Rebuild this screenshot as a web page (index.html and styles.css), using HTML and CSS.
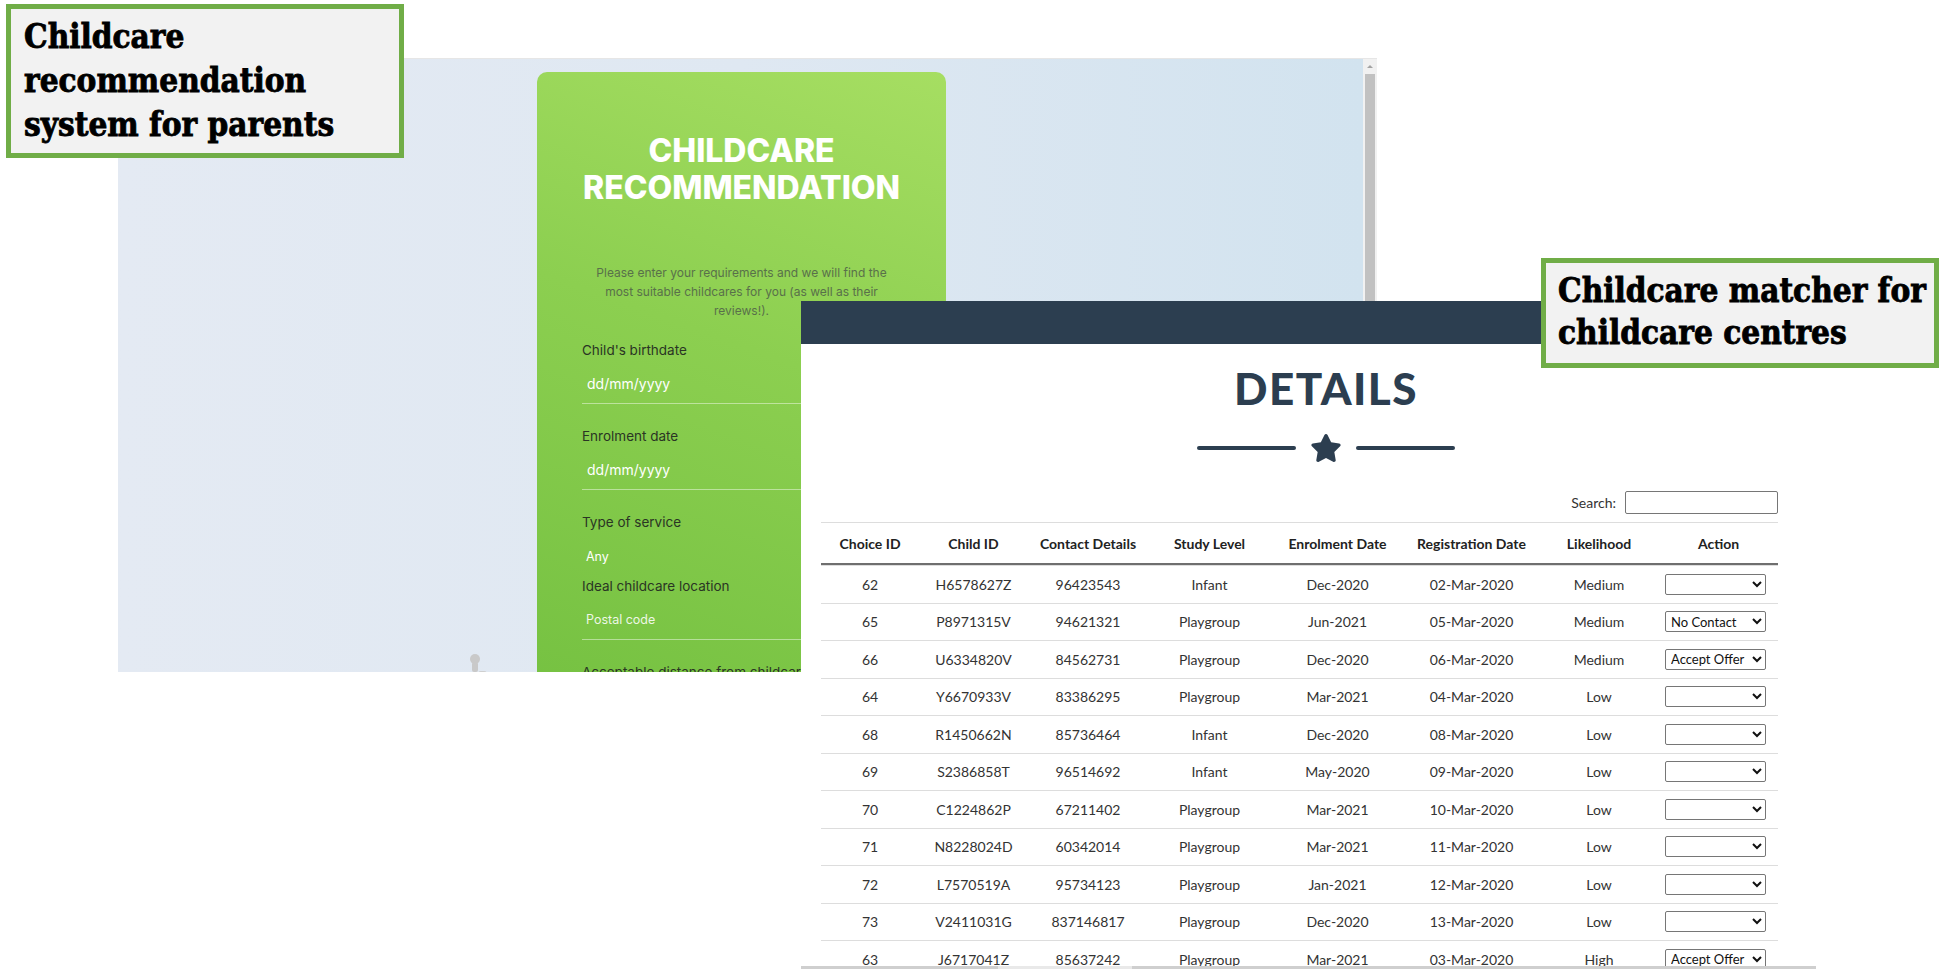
FILE: index.html
```html
<!DOCTYPE html>
<html lang="en">
<head>
    <meta charset="UTF-8">
    <meta name="viewport" content="width=device-width, initial-scale=1.0">
    <title>Childcare Recommendation &amp; Matcher</title>
    <link rel="stylesheet" href="styles.css">
</head>
<body>
<div class="canvas">

    <!-- parents' side: recommendation form -->
    <div class="shot parent-shot">
        <div class="parent-bg">
            <div class="rec-card">
                <h1 class="rec-title">CHILDCARE<br>RECOMMENDATION</h1>
                <p class="rec-intro">Please enter your requirements and we will find the<br>most suitable childcares for you (as well as their<br>reviews!).</p>

                <div class="field">
                    <label>Child's birthdate</label>
                    <div class="field-input">dd/mm/yyyy</div>
                </div>
                <div class="field">
                    <label>Enrolment date</label>
                    <div class="field-input">dd/mm/yyyy</div>
                </div>
                <div class="field">
                    <label>Type of service</label>
                    <div class="field-input field-select">Any</div>
                </div>
                <div class="field field-tight">
                    <label>Ideal childcare location</label>
                    <div class="field-input field-small">Postal code</div>
                </div>
                <div class="field">
                    <label>Acceptable distance from childcare</label>
                </div>
            </div>
            <svg class="figure" width="24" height="26" viewBox="0 0 24 26">
                <circle cx="8" cy="7" r="5" fill="#c9c9c9"/>
                <rect x="5" y="10" width="6" height="10" rx="2" fill="#c9c9c9"/>
                <rect x="11" y="19" width="9" height="7" rx="3" fill="#cfcfcf"/>
            </svg>
        </div>
        <div class="scrollbar">
            <div class="scroll-arrow"></div>
            <div class="scroll-thumb"></div>
        </div>
    </div>

    <!-- centres' side: matcher table -->
    <div class="shot centre-shot">
        <div class="topbar"></div>
        <div class="details-head">
            <h2>DETAILS</h2>
            <div class="divider">
                <span class="divider-line"></span>
                <svg class="star" width="32" height="28" viewBox="0 0 576 512">
                    <path fill="#2c3e50" d="M259.3 17.8L194 150.2 47.9 171.5c-26.2 3.8-36.7 36.1-17.7 54.6l105.7 103-25 145.5c-4.5 26.3 23.2 46 46.4 33.7L288 439.6l130.7 68.7c23.2 12.2 50.9-7.4 46.4-33.7l-25-145.5 105.7-103c19-18.5 8.5-50.8-17.7-54.6L382 150.2 316.7 17.8c-11.7-23.6-45.6-23.9-57.4 0z"/>
                </svg>
                <span class="divider-line"></span>
            </div>
        </div>

        <div class="search-row">
            <label for="search">Search:</label>
            <input type="text" id="search">
        </div>

        <table class="choices">
            <colgroup>
                <col style="width:98px"><col style="width:109px"><col style="width:120px"><col style="width:123px">
                <col style="width:133px"><col style="width:135px"><col style="width:120px"><col style="width:119px">
            </colgroup>
            <thead>
                <tr>
                    <th>Choice ID</th><th>Child ID</th><th>Contact Details</th><th>Study Level</th>
                    <th>Enrolment Date</th><th>Registration Date</th><th>Likelihood</th><th>Action</th>
                </tr>
            </thead>
            <tbody>
                <tr><td>62</td><td>H6578627Z</td><td>96423543</td><td>Infant</td><td>Dec-2020</td><td>02-Mar-2020</td><td>Medium</td>
                    <td class="action"><select><option selected></option><option>No Contact</option><option>Accept Offer</option></select></td></tr>
                <tr><td>65</td><td>P8971315V</td><td>94621321</td><td>Playgroup</td><td>Jun-2021</td><td>05-Mar-2020</td><td>Medium</td>
                    <td class="action"><select><option></option><option selected>No Contact</option><option>Accept Offer</option></select></td></tr>
                <tr><td>66</td><td>U6334820V</td><td>84562731</td><td>Playgroup</td><td>Dec-2020</td><td>06-Mar-2020</td><td>Medium</td>
                    <td class="action"><select><option></option><option>No Contact</option><option selected>Accept Offer</option></select></td></tr>
                <tr><td>64</td><td>Y6670933V</td><td>83386295</td><td>Playgroup</td><td>Mar-2021</td><td>04-Mar-2020</td><td>Low</td>
                    <td class="action"><select><option selected></option><option>No Contact</option><option>Accept Offer</option></select></td></tr>
                <tr><td>68</td><td>R1450662N</td><td>85736464</td><td>Infant</td><td>Dec-2020</td><td>08-Mar-2020</td><td>Low</td>
                    <td class="action"><select><option selected></option><option>No Contact</option><option>Accept Offer</option></select></td></tr>
                <tr><td>69</td><td>S2386858T</td><td>96514692</td><td>Infant</td><td>May-2020</td><td>09-Mar-2020</td><td>Low</td>
                    <td class="action"><select><option selected></option><option>No Contact</option><option>Accept Offer</option></select></td></tr>
                <tr><td>70</td><td>C1224862P</td><td>67211402</td><td>Playgroup</td><td>Mar-2021</td><td>10-Mar-2020</td><td>Low</td>
                    <td class="action"><select><option selected></option><option>No Contact</option><option>Accept Offer</option></select></td></tr>
                <tr><td>71</td><td>N8228024D</td><td>60342014</td><td>Playgroup</td><td>Mar-2021</td><td>11-Mar-2020</td><td>Low</td>
                    <td class="action"><select><option selected></option><option>No Contact</option><option>Accept Offer</option></select></td></tr>
                <tr><td>72</td><td>L7570519A</td><td>95734123</td><td>Playgroup</td><td>Jan-2021</td><td>12-Mar-2020</td><td>Low</td>
                    <td class="action"><select><option selected></option><option>No Contact</option><option>Accept Offer</option></select></td></tr>
                <tr><td>73</td><td>V2411031G</td><td>837146817</td><td>Playgroup</td><td>Dec-2020</td><td>13-Mar-2020</td><td>Low</td>
                    <td class="action"><select><option selected></option><option>No Contact</option><option>Accept Offer</option></select></td></tr>
                <tr><td>63</td><td>J6717041Z</td><td>85637242</td><td>Playgroup</td><td>Mar-2021</td><td>03-Mar-2020</td><td>High</td>
                    <td class="action"><select><option></option><option>No Contact</option><option selected>Accept Offer</option></select></td></tr>
            </tbody>
        </table>
        <div class="hscroll"><span></span></div>
    </div>

    <div class="caption caption-parents">Childcare<br>recommendation<br>system for parents</div>
    <div class="caption caption-centres">Childcare matcher for<br>childcare centres</div>
</div>
</body>
</html>
```

FILE: styles.css
```css
body {
    margin: 0;
    background-color: #fff;
}
.canvas {
    position: relative;
    width: 1954px;
    height: 969px;
    overflow: hidden;
}
.shot {
    position: absolute;
    overflow: hidden;
}

/* captions */
.caption {
    position: absolute;
    box-sizing: border-box;
    width: 398px;
    border: 5px solid #70ad47;
    background-color: #f2f2f2;
    color: #000;
    font-family: "DejaVu Serif", serif;
    font-weight: bold;
    font-stretch: condensed;
    font-size: 33px;
    -webkit-text-stroke: 0.8px #000;
    z-index: 5;
}
.caption-parents {
    left: 6px;
    top: 4px;
    height: 154px;
    padding: 6px 0 0 13px;
    line-height: 44px;
}
.caption-centres {
    left: 1541px;
    top: 258px;
    height: 110px;
    padding: 7px 0 0 12px;
    line-height: 42px;
}

/* parents screenshot */
.parent-shot {
    left: 118px;
    top: 58px;
    width: 1259px;
    height: 614px;
    display: flex;
    box-sizing: border-box;
    border-top: 1px solid #e6e6e6;
}
.parent-bg {
    position: relative;
    flex: 1;
    padding: 13px 0 0 419px;
    background: linear-gradient(90deg, #e4eaf3 0%, #dfe8f2 50%, #d2e3ef 100%);
}
.scrollbar {
    width: 14px;
    display: flex;
    flex-direction: column;
    align-items: center;
    background-color: #f1f1f1;
}
.scroll-arrow {
    height: 15px;
    width: 14px;
    position: relative;
}
.scroll-arrow::after {
    content: "";
    position: absolute;
    left: 4px;
    top: 6px;
    border-left: 3px solid transparent;
    border-right: 3px solid transparent;
    border-bottom: 3px solid #a3a3a3;
}
.scroll-thumb {
    flex: 1;
    width: 10px;
    background-color: #c1c1c1;
}
.figure {
    position: absolute;
    left: 349px;
    top: 593px;
}

.rec-card {
    box-sizing: border-box;
    width: 409px;
    min-height: 720px;
    padding: 60px 45px 0;
    border-radius: 10px 10px 0 0;
    background: linear-gradient(200deg, #a6de62 0%, #8ccf50 40%, #70be3e 100%);
    font-family: Inter, "Noto Sans", sans-serif;
}
.rec-title {
    margin: 0;
    text-align: center;
    color: #fff;
    font-size: 32px;
    line-height: 37px;
    font-weight: 800;
}
.rec-intro {
    margin: 57px 0 0;
    text-align: center;
    color: #59704a;
    font-size: 12px;
    line-height: 19px;
}
.field {
    margin-top: 22px;
}
.rec-intro + .field {
    margin-top: 20px;
}
.field-tight {
    margin-top: 0;
}
.field label {
    display: block;
    color: #2a3524;
    font-size: 13.5px;
    line-height: 20px;
}
.field-input {
    padding: 14px 0 9px 5px;
    line-height: 20px;
    color: #fff;
    font-size: 14px;
    border-bottom: 1px solid rgba(255, 255, 255, 0.45);
}
.field-select {
    padding: 15px 0 9px 4px;
    font-size: 12.5px;
    border-bottom: none;
}
.field-small {
    padding-left: 4px;
    font-size: 12.5px;
    color: rgba(255, 255, 255, 0.88);
}

/* centres screenshot */
.centre-shot {
    left: 801px;
    top: 301px;
    width: 1015px;
    height: 668px;
    box-sizing: border-box;
    background-color: #fff;
    font-family: Lato, "Noto Sans", sans-serif;
    color: #333;
}
.topbar {
    height: 43px;
    background-color: #2c3e50;
}
.details-head {
    width: 1050px;
    text-align: center;
}
.details-head h2 {
    margin: 20px 0 0;
    color: #2c3e50;
    font-size: 44px;
    line-height: 48px;
    font-weight: 900;
    letter-spacing: 1.5px;
}
.divider {
    margin-top: 22px;
    height: 28px;
    display: flex;
    justify-content: center;
    align-items: center;
    gap: 14px;
}
.divider-line {
    width: 99px;
    height: 4px;
    border-radius: 2px;
    background-color: #2c3e50;
}
.search-row {
    width: 957px;
    margin: 29px 0 0 20px;
    height: 23px;
    display: flex;
    justify-content: flex-end;
    align-items: center;
    gap: 9px;
    font-size: 14px;
}
.search-row input {
    box-sizing: border-box;
    width: 153px;
    height: 23px;
    margin: 0;
    border: 1px solid #767676;
    border-radius: 2px;
}
.choices {
    width: 957px;
    margin: 8px 0 0 20px;
    table-layout: fixed;
    border-collapse: separate;
    border-spacing: 0;
    font-size: 14px;
}
.choices th {
    padding: 12px 0 10px;
    line-height: 18px;
    font-weight: 700;
    color: #222;
    border-top: 1px solid #ddd;
    border-bottom: 2px solid #6f6f6f;
}
.choices td {
    height: 36.5px;
    padding: 0;
    text-align: center;
    border-top: 1px solid #ddd;
}
.choices td.action {
    text-align: left;
    padding-left: 6px;
}
.choices select {
    width: 101px;
    height: 21px;
    padding: 0 0 0 1px;
    border: 1px solid #767676;
    border-radius: 2px;
    background-color: #fff;
    color: #111;
    font-family: Lato, sans-serif;
    font-size: 13px;
    vertical-align: middle;
}
.hscroll {
    position: absolute;
    left: 0;
    right: 0;
    bottom: 0;
    height: 3px;
    background-color: #cfcfcf;
}
.hscroll span {
    display: block;
    margin-left: 197px;
    width: 134px;
    height: 3px;
    background-color: #e9e9e9;
}
```
